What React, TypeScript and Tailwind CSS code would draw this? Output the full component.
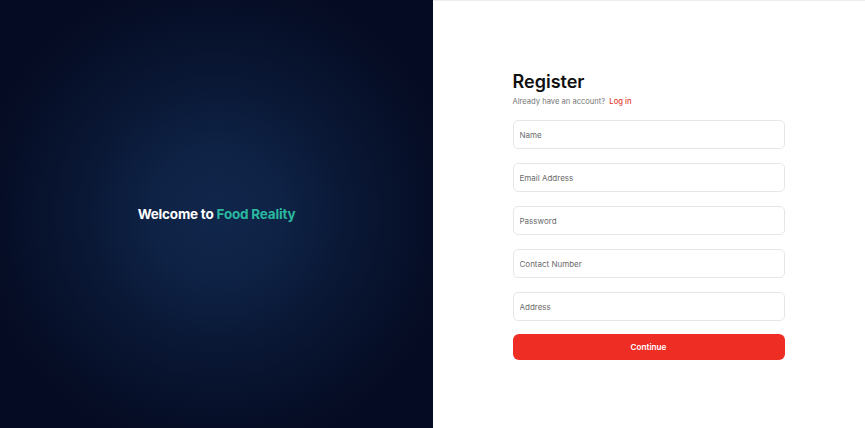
export default function App() {
  const fields = ['Name', 'Email Address', 'Password', 'Contact Number', 'Address']

  return (
    <div className="flex h-[428px] w-full font-['Inter',sans-serif]">
      {/* Left welcome panel */}
      <div className="flex w-[433px] shrink-0 items-center justify-center bg-[radial-gradient(circle_at_center,#10264a_0%,#0e2245_22%,#0a1836_42%,#07112b_62%,#050b22_80%)]">
        <h1 className="text-[13.5px] font-bold tracking-[-0.2px] text-white">
          Welcome to <span className="text-[#2ab9a0]">Food Reality</span>
        </h1>
      </div>

      {/* Right form panel */}
      <div className="flex flex-1 items-center justify-center border-t border-[#ececec] bg-white">
        <div className="mr-[1px] w-[272px] pb-[1px]">
          <h2 className="pt-[2px] text-[18px] font-semibold leading-[24px] text-[#111]">Register</h2>
          <p className="mt-[2px] text-[7.6px] text-[#777]">
            Already have an account?{' '}
            <span className="ml-[2px] font-medium text-[#e23a2e]">Log in</span>
          </p>
          <div className="mt-[13px] flex flex-col gap-[14px]">
            {fields.map((f) => (
              <input
                key={f}
                placeholder={f}
                type={f === 'Password' ? 'password' : 'text'}
                className="h-[29px] w-full rounded-[5px] border border-[#e6e6e6] px-[6px] text-[8px] text-[#333] outline-none placeholder:text-[#6b6b6b]"
              />
            ))}
          </div>
          <button className="mt-[13px] h-[26px] w-full rounded-[6px] bg-[#ee2e24] text-[8.2px] font-semibold text-white">
            Continue
          </button>
        </div>
      </div>
    </div>
  )
}
